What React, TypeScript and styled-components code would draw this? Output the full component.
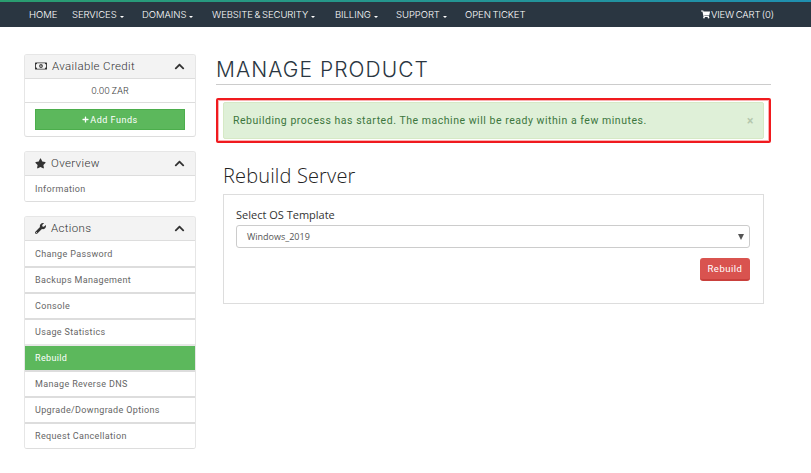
import React from "react";
import styled, { createGlobalStyle } from "styled-components";
import {
  FaChevronUp,
  FaPlus,
  FaRegMoneyBillAlt,
  FaShoppingCart,
  FaStar,
  FaWrench,
} from "react-icons/fa";

const GlobalStyle = createGlobalStyle`
  html, body {
    margin: 0;
    padding: 0;
    background: #fff;
    overflow: hidden;
  }
  * {
    box-sizing: border-box;
  }
`;

const Page = styled.div`
  width: 811px;
  height: 473px;
  overflow: hidden;
  font-family: "Roboto", "Liberation Sans", sans-serif;
  color: #555;
`;

const TopBar = styled.header`
  height: 27px;
  background: #2a3641;
  border-top: 2px solid #1b8f8f;
  border-image: linear-gradient(90deg, #2a9d6f, #1f8fb0) 1;
  display: flex;
  align-items: center;
  padding: 0 0 1px 29px;
  font-family: "Inter", "Liberation Sans", sans-serif;
  font-size: 9.5px;
  font-weight: 300;
  color: #fff;
`;

const NavItem = styled.a<{ $width: number }>`
  width: ${(p) => p.$width}px;
  display: flex;
  align-items: center;
  white-space: nowrap;
  letter-spacing: -0.05px;
  word-spacing: -1px;
`;

const Caret = styled.span`
  width: 0;
  height: 0;
  margin: 5px 0 0 3px;
  border-left: 2.5px solid transparent;
  border-right: 2.5px solid transparent;
  border-top: 2.5px solid #fff;
`;

const CartLink = styled.a`
  margin-left: 236px;
  display: flex;
  align-items: center;
  gap: 1px;
  white-space: nowrap;
  letter-spacing: -0.15px;
  word-spacing: -1px;
`;

const Layout = styled.div`
  display: flex;
  padding: 27px 40px 0 24px;
  gap: 20px;
`;

const Sidebar = styled.aside`
  width: 172px;
  flex: none;
  display: flex;
  flex-direction: column;
  gap: 14px;
`;

const Panel = styled.section`
  background: #fff;
  border: 1px solid #e6e6e6;
  border-bottom-color: #ddd;
  border-radius: 3px;
  overflow: hidden;
`;

const PanelHead = styled.div`
  height: 24px;
  background: #f3f3f3;
  border-bottom: 1px solid #ddd;
  display: flex;
  align-items: center;
  padding: 0 10px 1px;
  gap: 5px;
  font-size: 11.5px;
  font-weight: 300;
  letter-spacing: 0.35px;
  color: #333;
`;

const Title = styled.span`
  flex: 1;
`;

const PanelRow = styled.div<{ $active?: boolean }>`
  height: 26px;
  display: flex;
  align-items: center;
  padding: 0 10px;
  font-size: 9px;
  letter-spacing: 0.35px;
  border-top: 2px solid #ddd;
  color: ${(p) => (p.$active ? "#fff" : "#666")};
  background: ${(p) => (p.$active ? "#5cb85c" : "#fff")};
  border-top-color: ${(p) => (p.$active ? "#e8e8e8" : "#ddd")};

  ${PanelHead} + & {
    height: 25px;
    border-top: 0;
  }
`;

const Credit = styled.div`
  height: 24px;
  display: flex;
  align-items: center;
  justify-content: center;
  font-family: "Inter", "Liberation Sans", sans-serif;
  font-size: 9px;
  font-weight: 300;
  word-spacing: -1px;
  color: #444;
  border-bottom: 1px solid #ddd;
`;

const FundsWrap = styled.div`
  padding: 6px 10px;
`;

const FundsButton = styled.button`
  width: 100%;
  height: 21px;
  border: 1px solid #4cae4c;
  background: #5cb85c;
  color: #fff;
  font-family: "Roboto", "Liberation Sans", sans-serif;
  font-size: 9px;
  font-weight: 400;
  letter-spacing: 0.5px;
  display: flex;
  align-items: center;
  justify-content: center;
  gap: 1px;
  padding: 0;
`;

const Main = styled.main`
  width: 555px;
  flex: none;
`;

const PageTitle = styled.h1`
  margin: 0;
  height: 31px;
  font-family: "Inter", "Liberation Sans", sans-serif;
  font-size: 21px;
  font-weight: 300;
  line-height: 32px;
  color: #2a3641;
  letter-spacing: 1.05px;
  border-bottom: 1px solid #ccc;
`;

const Highlight = styled.div`
  margin-top: 13px;
  height: 45px;
  border: 2px solid #f01a1e;
  outline: 1px solid rgba(240, 26, 30, 0.35);
  outline-offset: -3px;
  border-radius: 2px;
  padding: 2px 5px;
`;

const Alert = styled.div`
  height: 37px;
  background: #dff0d8;
  border: 1px solid #d6e9c6;
  border-radius: 2px;
  display: flex;
  align-items: center;
  justify-content: space-between;
  padding: 0 9px 0 9px;
  font-size: 10.5px;
  letter-spacing: 0.53px;
  color: #3c763d;
`;

const Close = styled.span`
  font-size: 12px;
  font-weight: 700;
  color: #b5c7ad;
`;

const Content = styled.div`
  padding: 0 7px;
`;

const SectionTitle = styled.h2`
  margin: 20px 0 0;
  height: 31px;
  font-family: "Open Sans", "Liberation Sans", sans-serif;
  font-size: 20px;
  font-weight: 300;
  letter-spacing: 0.15px;
  line-height: 26px;
  color: #222;
`;

const Card = styled.div`
  height: 110px;
  border: 1px solid #ddd;
  padding: 13px 13px 0 12px;
`;

const FieldLabel = styled.label`
  display: block;
  height: 17px;
  font-family: "Open Sans", "Liberation Sans", sans-serif;
  font-size: 11px;
  line-height: 13px;
  color: #333;
`;

const Select = styled.div`
  height: 23px;
  border: 1px solid #ccc;
  border-radius: 3px;
  display: flex;
  align-items: center;
  justify-content: space-between;
  padding: 0 5px 0 10px;
  font-family: "Open Sans", "Liberation Sans", sans-serif;
  font-size: 9px;
  color: #555;
`;

const SelectArrow = styled.span`
  width: 0;
  height: 0;
  border-left: 3.5px solid transparent;
  border-right: 3.5px solid transparent;
  border-top: 6px solid #555;
`;

const Actions = styled.div`
  display: flex;
  justify-content: flex-end;
  margin-top: 10px;
`;

const DangerButton = styled.button`
  width: 50px;
  height: 23px;
  padding: 0;
  border: 0;
  border-bottom: 2px solid #c9403c;
  border-radius: 3px;
  background: #d9534f;
  color: #fff;
  font-family: "Roboto", "Liberation Sans", sans-serif;
  font-size: 9.5px;
  font-weight: 400;
  letter-spacing: 0.5px;
`;

const navItems = [
  { label: "HOME", width: 43 },
  { label: "SERVICES", width: 70, caret: true },
  { label: "DOMAINS", width: 70, caret: true },
  { label: "WEBSITE & SECURITY", width: 123, caret: true },
  { label: "BILLING", width: 61, caret: true },
  { label: "SUPPORT", width: 69, caret: true },
  { label: "OPEN TICKET", width: 0 },
];

const actions = [
  "Change Password",
  "Backups Management",
  "Console",
  "Usage Statistics",
  "Rebuild",
  "Manage Reverse DNS",
  "Upgrade/Downgrade Options",
  "Request Cancellation",
];

export default function App() {
  return (
    <Page>
      <GlobalStyle />
      <TopBar>
        {navItems.map((item) => (
          <NavItem key={item.label} $width={item.width}>
            {item.label}
            {item.caret && <Caret />}
          </NavItem>
        ))}
        <CartLink>
          <FaShoppingCart size={9} />
          VIEW CART (0)
        </CartLink>
      </TopBar>
      <Layout>
        <Sidebar>
          <Panel>
            <PanelHead>
              <FaRegMoneyBillAlt size={12} color="#333" />
              <Title>Available Credit</Title>
              <FaChevronUp size={11} color="#333" />
            </PanelHead>
            <Credit>0.00 ZAR</Credit>
            <FundsWrap>
              <FundsButton>
                <FaPlus size={7} />
                Add Funds
              </FundsButton>
            </FundsWrap>
          </Panel>
          <Panel>
            <PanelHead>
              <FaStar size={11} color="#333" />
              <Title>Overview</Title>
              <FaChevronUp size={11} color="#333" />
            </PanelHead>
            <PanelRow>Information</PanelRow>
          </Panel>
          <Panel>
            <PanelHead>
              <FaWrench size={11} color="#333" />
              <Title>Actions</Title>
              <FaChevronUp size={11} color="#333" />
            </PanelHead>
            {actions.map((label) => (
              <PanelRow key={label} $active={label === "Rebuild"}>
                {label}
              </PanelRow>
            ))}
          </Panel>
        </Sidebar>
        <Main>
          <PageTitle>MANAGE PRODUCT</PageTitle>
          <Highlight>
            <Alert>
              Rebuilding process has started. The machine will be ready within a few minutes.
              <Close>×</Close>
            </Alert>
          </Highlight>
          <Content>
            <SectionTitle>Rebuild Server</SectionTitle>
            <Card>
              <FieldLabel>Select OS Template</FieldLabel>
              <Select>
                Windows_2019
                <SelectArrow />
              </Select>
              <Actions>
                <DangerButton>Rebuild</DangerButton>
              </Actions>
            </Card>
          </Content>
        </Main>
      </Layout>
    </Page>
  );
}
